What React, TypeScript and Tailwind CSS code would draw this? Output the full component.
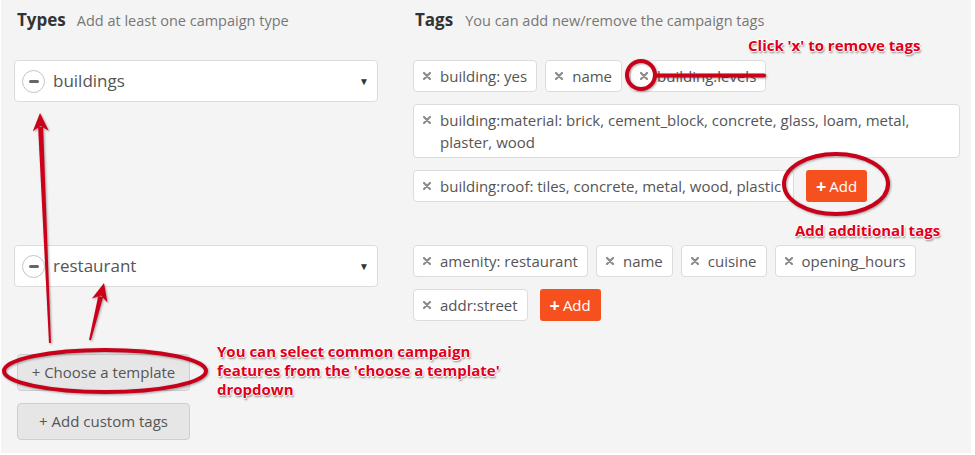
import type { ReactNode } from 'react';

const font = "font-['Open_Sans','Liberation_Sans',sans-serif]";
const note =
  "font-['Open_Sans',sans-serif] text-[15px] font-bold leading-[19px] text-[#e0001b] [text-shadow:1px_0_0_#fff,-1px_0_0_#fff,0_1px_0_#fff,0_-1px_0_#fff,1px_2px_2px_rgba(0,0,0,0.45)]";

function XIcon() {
  return (
    <svg width="8" height="8" viewBox="0 0 8 8" className="shrink-0">
      <path d="M1 1 L7 7 M7 1 L1 7" stroke="#8c8c8c" strokeWidth="2.2" strokeLinecap="round" />
    </svg>
  );
}

function Tag({ children, className = '' }: { children: ReactNode; className?: string }) {
  return (
    <div
      className={`flex min-h-[32px] items-center gap-[9px] rounded-[4px] border border-[#dcdcdc] bg-white px-[9px] text-[15px] leading-[22px] text-[#555] ${className}`}
    >
      <XIcon />
      <span>{children}</span>
    </div>
  );
}

function AddButton() {
  return (
    <button
      type="button"
      className="flex h-[32px] items-center gap-[3px] rounded-[3px] bg-[#f5501e] px-[10px] text-[15px] text-white"
    >
      <span className="text-[18px] font-bold leading-none">+</span>
      Add
    </button>
  );
}

function TypeSelect({ label }: { label: string }) {
  return (
    <div className="flex h-[42px] items-center rounded-[4px] border border-[#dcdcdc] bg-white pl-[7px] pr-[8px]">
      <span className="flex h-[23px] w-[23px] items-center justify-center rounded-full border border-[#c4c4c4] bg-white">
        <span className="h-[3px] w-[10px] rounded-full bg-[#666]" />
      </span>
      <span className="ml-[8px] flex-1 text-[17px] text-[#555]">{label}</span>
      <span className="text-[10px] text-[#333]">▼</span>
    </div>
  );
}

function arrowPoints(tx: number, ty: number, hx: number, hy: number) {
  const len = Math.hypot(hx - tx, hy - ty);
  const dx = (hx - tx) / len;
  const dy = (hy - ty) / len;
  const nx = -dy;
  const ny = dx;
  const L = 18;
  const W = 8;
  const bx = hx - dx * L;
  const by = hy - dy * L;
  const sx = hx - dx * (L - 4);
  const sy = hy - dy * (L - 4);
  const shaft = [
    [tx + nx * 1, ty + ny * 1],
    [sx + nx * 2.5, sy + ny * 2.5],
    [sx - nx * 2.5, sy - ny * 2.5],
    [tx - nx * 1, ty - ny * 1],
  ];
  const head = [
    [hx, hy],
    [bx + nx * W, by + ny * W],
    [hx - dx * (L - 5), hy - dy * (L - 5)],
    [bx - nx * W, by - ny * W],
  ];
  const fmt = (p: number[][]) => p.map((q) => q.join(',')).join(' ');
  return { shaft: fmt(shaft), head: fmt(head) };
}

function Marks() {
  const a1 = arrowPoints(50, 343, 40, 113);
  const a2 = arrowPoints(90, 340, 104, 283);
  return (
    <svg
      width="975"
      height="455"
      className="pointer-events-none absolute left-0 top-0 drop-shadow-[1px_1px_1px_rgba(0,0,0,0.35)]"
    >
      <g fill="#cc0018">
        <polygon points={a1.shaft} />
        <polygon points={a1.head} />
        <polygon points={a2.shaft} />
        <polygon points={a2.head} />
      </g>
      <g fill="none" stroke="#c8001a" strokeWidth="4">
        <ellipse cx="105" cy="371" rx="101" ry="21" />
        <ellipse cx="836" cy="184" rx="52" ry="30" />
        <circle cx="641" cy="75" r="14" />
      </g>
      <line x1="655" y1="75.5" x2="764" y2="75.5" stroke="#c8001a" strokeWidth="4" strokeLinecap="round" />
    </svg>
  );
}

export default function App() {
  return (
    <div className={`relative h-[455px] w-[975px] overflow-hidden bg-white ${font}`}>
      <div className="ml-[1px] h-[453px] w-[970px] bg-[#f4f4f4] pl-[13px] pt-[8px]">
        <div className="grid grid-cols-[364px_547px] gap-x-[35px]">
          <div className="flex items-baseline gap-[11px] pl-[3px] leading-[24px]">
            <h2 className="text-[17px] font-bold text-[#333]">Types</h2>
            <span className="text-[14.5px] text-[#777]">Add at least one campaign type</span>
          </div>
          <div className="flex items-baseline gap-[12px] pl-[2px] leading-[24px]">
            <h2 className="text-[17px] font-bold text-[#333]">Tags</h2>
            <span className="text-[14.5px] text-[#777]">You can add new/remove the campaign tags</span>
          </div>

          <div className="mt-[27px]">
            <TypeSelect label="buildings" />
          </div>
          <div className="mt-[27px] flex flex-wrap gap-x-[8px] gap-y-[12px]">
            <Tag>building: yes</Tag>
            <Tag>name</Tag>
            <Tag>building:levels</Tag>
            <Tag className="w-full items-start py-[4px] [&>svg]:mt-[7px]">
              building:material: brick, cement_block, concrete, glass, loam, metal, plaster, wood
            </Tag>
            <div className="flex gap-[12px]">
              <Tag className="w-[381px] overflow-hidden whitespace-nowrap">
                building:roof: tiles, concrete, metal, wood, plastic
              </Tag>
              <AddButton />
            </div>
          </div>

          <div className="mt-[43px]">
            <TypeSelect label="restaurant" />
          </div>
          <div className="mt-[43px] flex flex-wrap gap-x-[8px] gap-y-[12px]">
            <Tag>amenity: restaurant</Tag>
            <Tag>name</Tag>
            <Tag>cuisine</Tag>
            <Tag>opening_hours</Tag>
            <Tag>addr:street</Tag>
            <div className="ml-[4px]">
              <AddButton />
            </div>
          </div>

          <div className="ml-[3px] mt-[33px] flex flex-col gap-[12px]">
            <button
              type="button"
              className="h-[37px] w-[173px] rounded-[4px] border border-[#cfcfcf] bg-[#e6e6e6] text-[15px] text-[#555]"
            >
              + Choose a template
            </button>
            <button
              type="button"
              className="h-[37px] w-[173px] rounded-[4px] border border-[#cfcfcf] bg-[#e6e6e6] text-[15px] text-[#555]"
            >
              + Add custom tags
            </button>
          </div>
        </div>
      </div>

      <Marks />
      <p className={`${note} absolute left-[748px] top-[36px]`}>Click 'x' to remove tags</p>
      <p className={`${note} absolute left-[795px] top-[221px]`}>Add additional tags</p>
      <p className={`${note} absolute left-[217px] top-[342px] w-[300px]`}>
        You can select common campaign
        <br />
        features from the 'choose a template'
        <br />
        dropdown
      </p>
    </div>
  );
}
